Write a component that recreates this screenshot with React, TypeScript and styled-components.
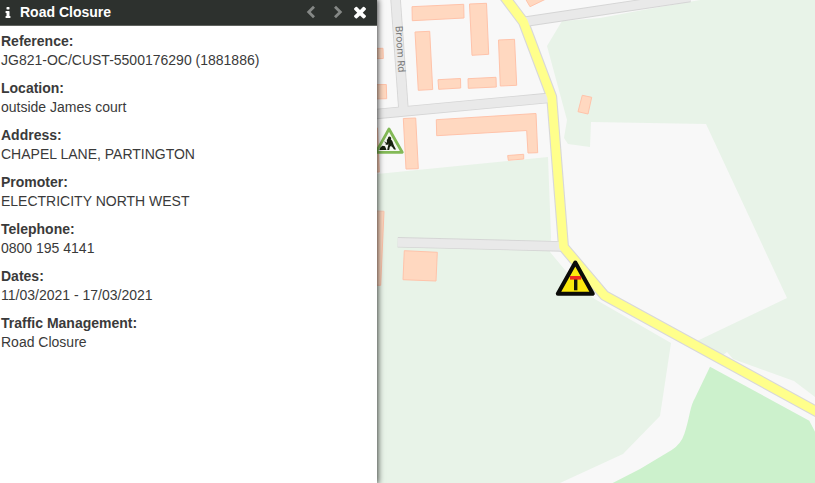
import React from "react";
import styled, { createGlobalStyle } from "styled-components";

const GlobalStyle = createGlobalStyle`
  *, *::before, *::after { box-sizing: border-box; }
  body {
    margin: 0;
    background: #f8f8f8;
    color: #3a3a3a;
    font-family: "Liberation Sans", Arial, sans-serif;
    font-size: 14px;
    line-height: 19px;
  }
`;

const Layout = styled.div`
  display: flex;
  min-height: 100vh;
`;

const Panel = styled.aside`
  position: relative;
  z-index: 1;
  flex: 0 0 377px;
  background: #fff;
  box-shadow: 0 0 6px 1px rgba(0, 0, 0, 0.75);
`;

const PanelHeader = styled.header`
  display: flex;
  align-items: center;
  height: 26px;
  padding: 0 8px 0 1px;
  background: #2d312e;
  border-bottom: 1px solid #60635f;
  color: #fff;
`;

const Title = styled.h1`
  flex: 1;
  margin: 0 0 0 5px;
  font-size: 14px;
  line-height: 19px;
  font-weight: bold;
`;

const Icon = styled.svg<{ $size: number }>`
  display: block;
  flex: none;
  width: ${(p) => p.$size}px;
  height: ${(p) => p.$size}px;
`;

const HeaderButton = styled.button<{ $muted?: boolean; $width: number }>`
  display: flex;
  align-items: center;
  align-self: flex-start;
  justify-content: center;
  width: ${(p) => p.$width}px;
  height: 24px;
  padding: 0;
  border: 0;
  background: none;
  color: ${(p) => (p.$muted ? "#858886" : "#fff")};
  cursor: pointer;
`;

const Details = styled.dl`
  display: flex;
  flex-direction: column;
  gap: 9px;
  margin: 0;
  padding: 6px 1px;
`;

const Term = styled.dt`
  font-weight: bold;
`;

const Value = styled.dd`
  margin: 0;
`;

const MapArea = styled.main`
  position: relative;
  flex: 1;
  min-width: 0;
  overflow: hidden;
`;

const MapDrawing = styled.svg`
  position: absolute;
  inset: 0;
  width: 100%;
  height: 100%;
`;

const RoadName = styled.text`
  font-family: "Noto Sans", sans-serif;
  font-size: 10px;
  fill: #777;
`;

const fields = [
  ["Reference:", "JG821-OC/CUST-5500176290 (1881886)"],
  ["Location:", "outside James court"],
  ["Address:", "CHAPEL LANE, PARTINGTON"],
  ["Promoter:", "ELECTRICITY NORTH WEST"],
  ["Telephone:", "0800 195 4141"],
  ["Dates:", "11/03/2021 - 17/03/2021"],
  ["Traffic Management:", "Road Closure"],
];

const fieldsLand = [
  "377,174 548,157 551,237 550,252 565,270 593,298 671,343 660,416 623,454 560,483 377,483",
  "700,0 643,10 600,18 562,21 547,46 567,120 564,138 568,144 590,147 591,122 706,124 787,298 697,341 722,356 727,352 733,359 794,381 815,397 815,0",
];

const buildings = [
  "412,6.7 463.7,4.3 464,18 412.3,20.7",
  "469.5,4 486.5,3.3 488.7,54.3 472,55.3",
  "415,32 429.7,31.3 432.7,89.5 418.3,90.3",
  "498.5,40 514.5,39.3 516.7,85.3 500.3,86",
  "438,79.7 460.5,78.5 460.7,88 438.7,89.3",
  "468,78.7 496,77.3 496.3,87 468.3,88.3",
  "436.3,119.7 536,113.5 537.7,152.7 528,153 526.7,130.5 436.7,135.7",
  "507.7,155.5 523.7,154.3 523.7,159 508.3,160.3",
  "403.3,118.5 415.7,118 418.3,168.7 406,169",
  "370,48.5 383,48.3 383.3,58.5 370,58.7",
  "370,84.7 386.3,84.5 386.7,98.7 370,99",
  "370,128 377.5,128 379.3,172 370,172",
  "370,211 384,211.3 380.7,285.3 370,285",
  "525,-2 530,6.7 548,-2",
  "404.3,250.7 437.3,252.3 436,281 403,279.7",
  "582.3,95.3 591.7,97.3 588,114 578,111.7",
];

const streets = [
  "M395.5 -2L403.5 110",
  "M370 114.6L550 97.8",
  "M523 22L590 12L690 -3",
  "M397.7 242.3L562 246.4",
];

const mainRoad = "M504 -4L513 8L523.5 22L551.7 97L563.5 247L604.5 295.5L818 412.3";

function ChevronIcon({ right }: { right?: boolean }) {
  return (
    <Icon $size={14} viewBox="0 0 14 14" aria-hidden="true">
      <path
        d={right ? "M4 1.7L9.3 7L4 12.3" : "M10 1.7L4.7 7L10 12.3"}
        fill="none"
        stroke="currentColor"
        strokeWidth="2.8"
      />
    </Icon>
  );
}

function StreetMap() {
  return (
    <MapDrawing viewBox="377 0 438 483" preserveAspectRatio="xMinYMin slice" role="img" aria-label="Map of Chapel Lane">
      <g fill="#e8f3e8">
        {fieldsLand.map((p) => <polygon key={p} points={p} />)}
      </g>
      <path
        d="M710 366.7L809.3 420.7L815 431.7V483H612.7L640 469L671.7 450Q681 444 684.3 434Q687 426 690 412Q692 403 695 398Z"
        fill="#ccf1cc"
      />
      <g fill="none" stroke="#d5d5d5" strokeWidth="10.5">
        {streets.map((d) => <path key={d} d={d} />)}
      </g>
      <path d={mainRoad} fill="none" stroke="#d8d8d8" strokeWidth="11" strokeLinejoin="round" />
      <g fill="none" stroke="#e9e9e9" strokeWidth="8.8">
        {streets.map((d) => <path key={d} d={d} />)}
      </g>
      <path d={mainRoad} fill="none" stroke="#ffff8b" strokeWidth="8.8" strokeLinejoin="round" />
      <g fill="#ffd8c0" stroke="#ffc3aa" strokeWidth="1">
        {buildings.map((p) => <polygon key={p} points={p} />)}
      </g>
      <RoadName transform="translate(395.5 26) rotate(86.5)">Broom Rd</RoadName>
      <g>
        <path d="M389 129L402.2 152.3H376Z" fill="#f5f7f2" stroke="#83b957" strokeWidth="2.8" strokeLinejoin="round" />
        <path
          d="M379.3 150L380.5 147.3L382.5 145.8L385 146.2L386.5 150Z M388 138.2a1.6 1.6 0 1 1 2.8 1L392.3 141L393.8 145.2L396 149.6H394L391.3 145.6L389.8 147L389.2 150H387.2L388 146L389 143.5L387 145L385 144L387 142.5L386.8 140Z"
          fill="#17200f"
        />
        <path d="M384.5 141.8L394 147.5" stroke="#17200f" strokeWidth="0.8" />
      </g>
      <g>
        <path d="M575.3 262.6L592.8 293.7H557.8Z" fill="#fbe90e" stroke="#0b0b08" strokeWidth="4" strokeLinejoin="round" />
        <path d="M574 279h3.4v11.3h-3.4z" fill="#17160a" />
        <path d="M570 276h11.2v3.6h-11.2z" fill="#f02c20" />
      </g>
    </MapDrawing>
  );
}

export default function App() {
  return (
    <>
      <GlobalStyle />
      <Layout>
        <Panel aria-label="Road closure details">
          <PanelHeader>
            <Icon $size={14} viewBox="0 0 1792 1792" fill="currentColor" aria-hidden="true">
              <path d="M1216 1344v128q0 26-19 45t-45 19h-512q-26 0-45-19t-19-45v-128q0-26 19-45t45-19h64v-384h-64q-26 0-45-19t-19-45v-128q0-26 19-45t45-19h384q26 0 45 19t19 45v576h64q26 0 45 19t19 45zm-128-1152v192q0 26-19 45t-45 19h-256q-26 0-45-19t-19-45v-192q0-26 19-45t45-19h256q26 0 45 19t19 45z" />
            </Icon>
            <Title>Road Closure</Title>
            <HeaderButton $muted $width={28} aria-label="Previous">
              <ChevronIcon />
            </HeaderButton>
            <HeaderButton $muted $width={26} aria-label="Next">
              <ChevronIcon right />
            </HeaderButton>
            <HeaderButton $width={18} aria-label="Close">
              <Icon $size={18} viewBox="0 0 1792 1792" fill="currentColor" aria-hidden="true">
                <path d="M1490 1322q0 40-28 68l-136 136q-28 28-68 28t-68-28l-294-294-294 294q-28 28-68 28t-68-28l-136-136q-28-28-28-68t28-68l294-294-294-294q-28-28-28-68t28-68l136-136q28-28 68-28t68 28l294 294 294-294q28-28 68-28t68 28l136 136q28 28 28 68t-28 68l-294 294 294 294q28 28 28 68z" />
              </Icon>
            </HeaderButton>
          </PanelHeader>
          <Details>
            {fields.map(([term, value]) => (
              <div key={term}>
                <Term>{term}</Term>
                <Value>{value}</Value>
              </div>
            ))}
          </Details>
        </Panel>
        <MapArea>
          <StreetMap />
        </MapArea>
      </Layout>
    </>
  );
}
